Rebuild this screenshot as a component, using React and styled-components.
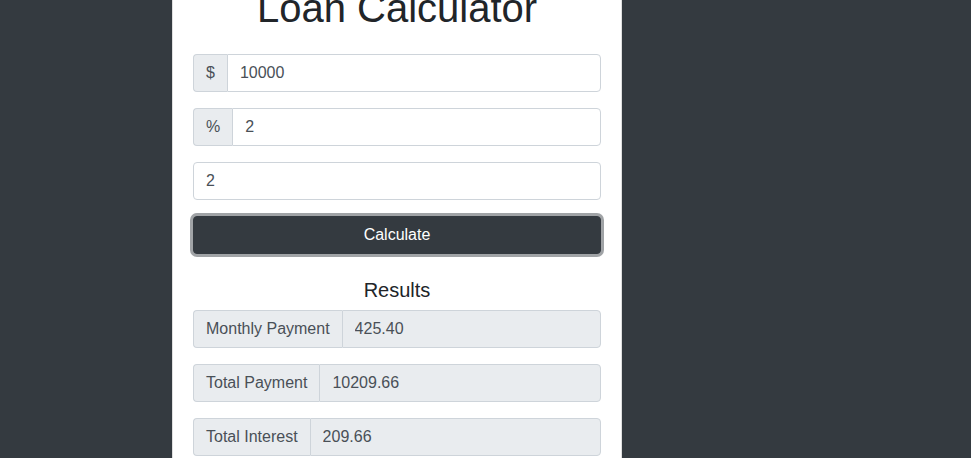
import React, { useState } from "react";
import styled, { createGlobalStyle } from "styled-components";

const dark = "#343a40";
const textColor = "#212529";
const inputText = "#495057";
const borderColor = "#ced4da";
const addonBg = "#e9ecef";

const GlobalStyle = createGlobalStyle`
    html, body {
        margin: 0;
        padding: 0;
        background: ${dark};
    }
    body {
        font-family: "Liberation Sans", Helvetica, Arial, sans-serif;
        font-size: 16px;
        line-height: 1.5;
        color: ${textColor};
        overflow: hidden;
    }
    * {
        box-sizing: border-box;
    }
`;

const Page = styled.div`
    display: flex;
    justify-content: flex-start;
    min-height: 100vh;
    padding-left: 172px;
    background-color: ${dark};
`;

const Card = styled.div`
    width: 450px;
    margin-top: -17px;
    padding: 0 20px 20px;
    background-color: #fff;
    border: 1px solid rgba(0, 0, 0, 0.125);
    border-radius: 4px;
`;

const Title = styled.h1`
    margin: 0 0 22px;
    font-size: 40px;
    font-weight: 500;
    line-height: 1.2;
    text-align: center;
    color: ${textColor};
`;

const Group = styled.div`
    display: flex;
    align-items: stretch;
    width: 100%;
    height: 38px;
    margin-bottom: 16px;
`;

const Addon = styled.span`
    display: flex;
    align-items: center;
    padding: 0 12px;
    font-size: 16px;
    color: ${inputText};
    background-color: ${addonBg};
    border: 1px solid ${borderColor};
    border-right: none;
    border-radius: 4px 0 0 4px;
    white-space: nowrap;
`;

const Field = styled.input`
    flex: 1;
    min-width: 0;
    height: 38px;
    padding: 0 12px;
    font-family: inherit;
    font-size: 16px;
    color: ${inputText};
    background-color: ${(p) => (p.readOnly ? addonBg : "#fff")};
    border: 1px solid ${borderColor};
    border-radius: ${(p) => (p.$joined ? "0 4px 4px 0" : "4px")};
    outline: none;
`;

const Button = styled.button`
    display: block;
    width: 100%;
    height: 38px;
    margin-bottom: 24px;
    font-family: inherit;
    font-size: 16px;
    color: #fff;
    background-color: ${dark};
    border: 1px solid ${dark};
    border-radius: 4px;
    box-shadow: 0 0 0 3px rgba(82, 88, 93, 0.55);
    cursor: pointer;
`;

const Heading = styled.h5`
    margin: 0 0 8px;
    font-size: 20px;
    font-weight: 500;
    line-height: 1.2;
    text-align: center;
    color: ${textColor};
`;

function InputRow({ addon, value, readOnly, onChange }) {
    return (
        <Group>
            {addon && <Addon>{addon}</Addon>}
            <Field
                $joined={!!addon}
                value={value}
                readOnly={readOnly}
                onChange={onChange}
            />
        </Group>
    );
}

export default function App() {
    const [amount, setAmount] = useState("10000");
    const [interest, setInterest] = useState("2");
    const [years, setYears] = useState("2");

    return (
        <Page>
            <GlobalStyle />
            <Card>
                <Title>Loan Calculator</Title>
                <InputRow addon="$" value={amount} onChange={(e) => setAmount(e.target.value)} />
                <InputRow addon="%" value={interest} onChange={(e) => setInterest(e.target.value)} />
                <InputRow value={years} onChange={(e) => setYears(e.target.value)} />
                <Button>Calculate</Button>
                <Heading>Results</Heading>
                <InputRow addon="Monthly Payment" value="425.40" readOnly />
                <InputRow addon="Total Payment" value="10209.66" readOnly />
                <InputRow addon="Total Interest" value="209.66" readOnly />
            </Card>
        </Page>
    );
}
